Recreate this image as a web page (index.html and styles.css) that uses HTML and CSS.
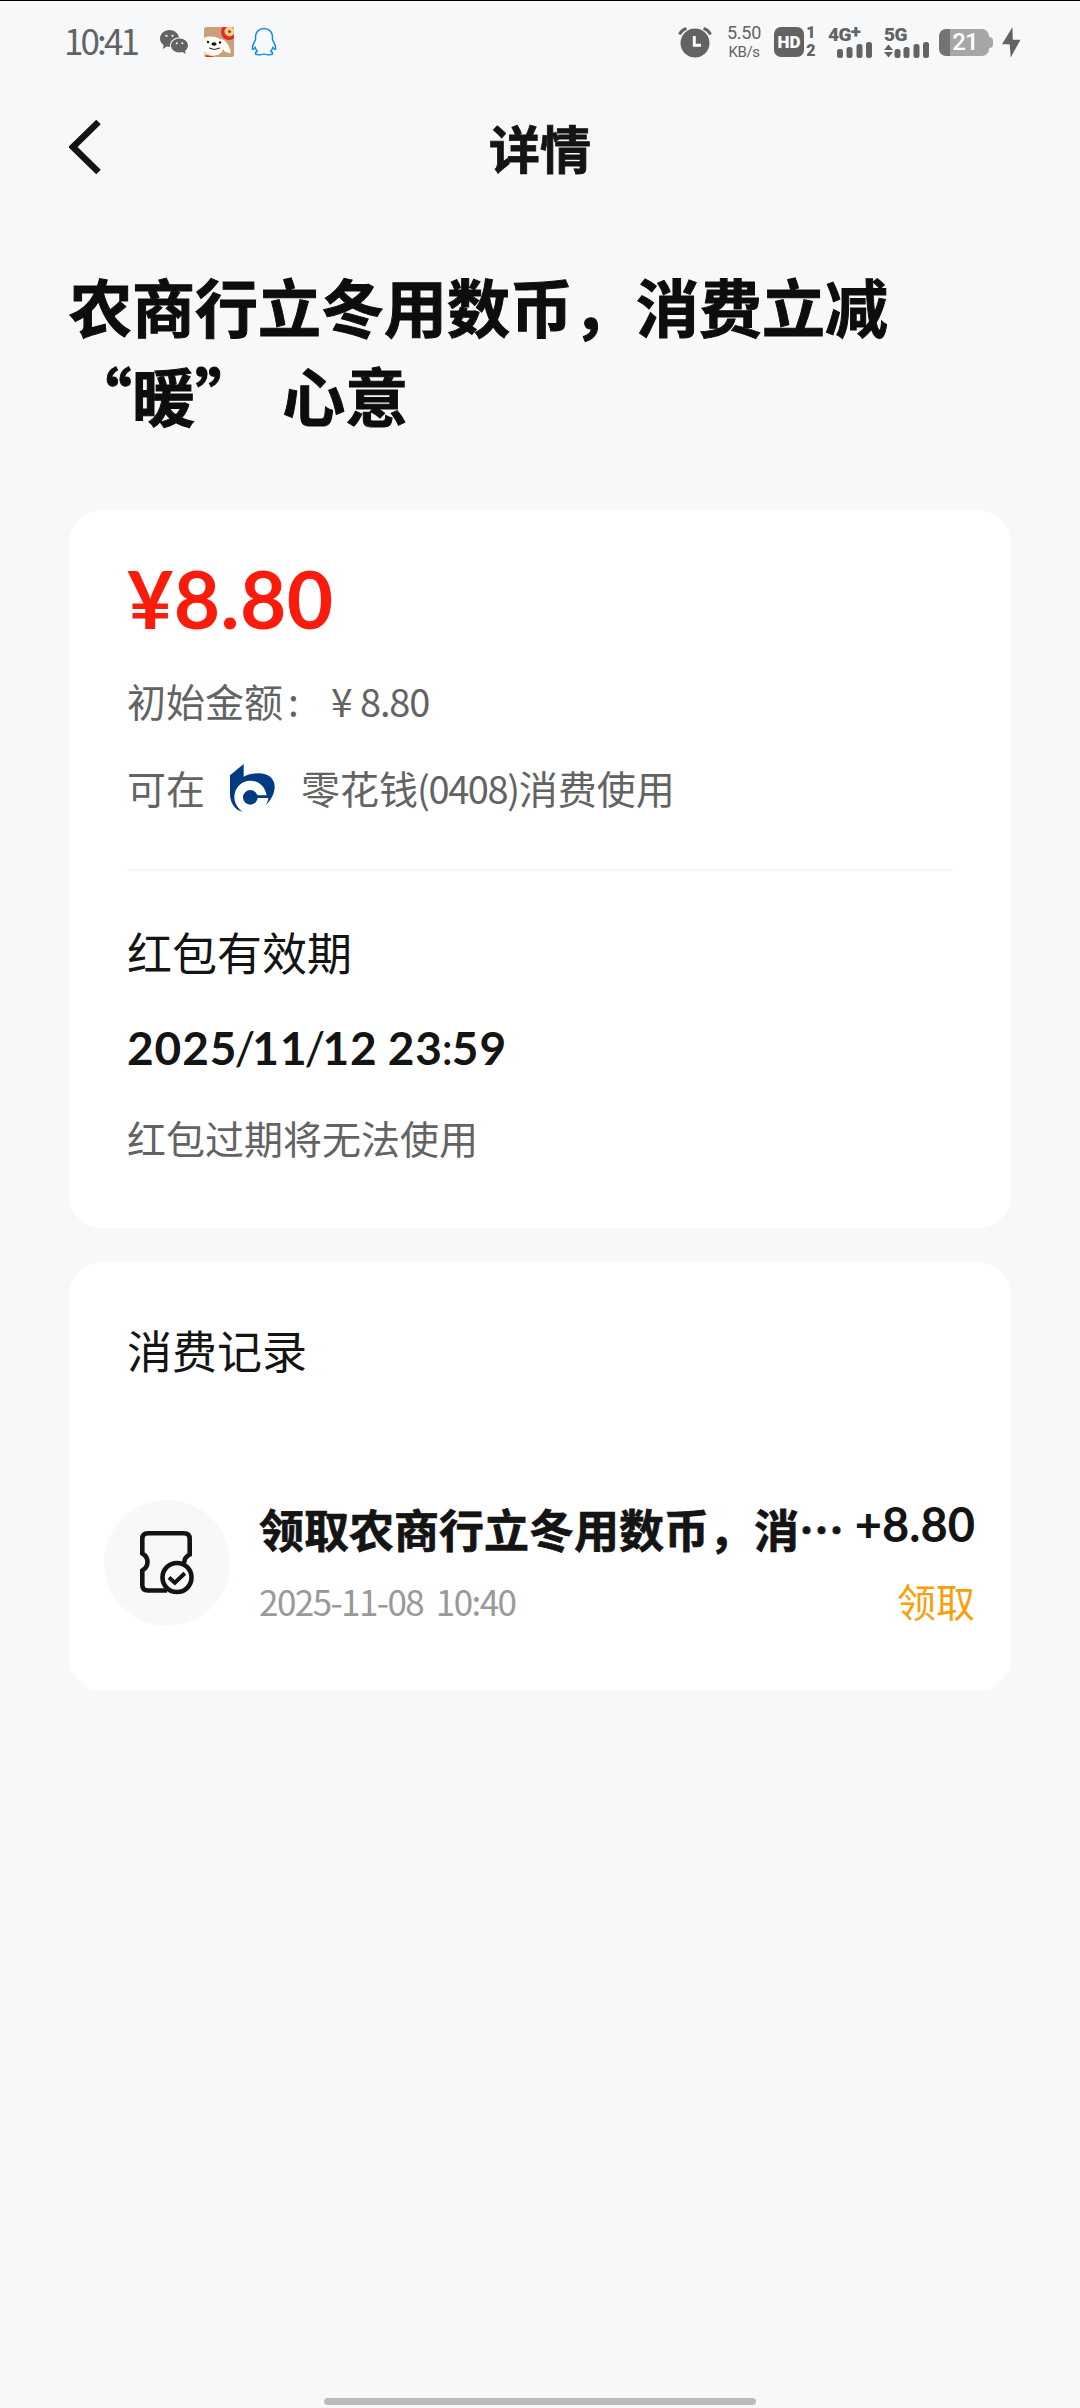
FILE: index.html
```html
<!DOCTYPE html>
<html lang="zh-CN">
<head>
<meta charset="utf-8">
<title>详情</title>
<link rel="stylesheet" href="styles.css">
</head>
<body>
<div class="screen">
  <header class="status">
    <span class="clock">10:41</span>
    <svg class="i-chat" width="28" height="25" viewBox="0 0 28 25">
      <path fill="#636363" d="M9.500 0C4.200 0 0 3.800 0 8.500c0 2.600 1.400 5 3.600 6.600L2.800 19l4-2.400c.9.200 1.800.3 2.700.3h.6c-1-5 3.500-9.500 9-9.300C18.300 3.300 14.300 0 9.500 0z"/>
      <path fill="#636363" d="M28 15.500c0-4-3.800-7-8.500-7s-8.500 3.100-8.500 7 3.800 7 8.500 7c1 0 2-.1 2.900-.4l3.400 2-.8-3.200c1.800-1.300 3-3.200 3-5.400z"/>
      <g fill="#f7f8fa"><circle cx="6.500" cy="5.800" r="1.100"/><circle cx="12.500" cy="5.800" r="1.100"/><circle cx="16.800" cy="13.200" r="1"/><circle cx="22.300" cy="13.200" r="1"/></g>
    </svg>
    <svg class="i-dog" width="30" height="30" viewBox="0 0 30 30">
      <defs><clipPath id="dogclip"><rect width="30" height="30" rx="2.500"/></clipPath></defs>
      <g clip-path="url(#dogclip)">
        <rect width="30" height="30" fill="#c9a077"/>
        <circle cx="25" cy="5" r="8" fill="#e12a20"/>
        <circle cx="25.500" cy="4.500" r="5" fill="#ffd08a"/>
        <circle cx="25.500" cy="4.500" r="1.500" fill="#93451c"/>
        <path d="M0 11c4-2 11-2 16 1 4 0 9 4 11 14-5 0-7-2-8-4-1 6-8 8-19 6z" fill="#fffdf8"/>
        <path d="M0 24c4 3 8 4 13 6H0z" fill="#f8d6b4"/>
        <path d="M1 28c3 0 6 1 11 2H2z" fill="#d92a25"/>
        <ellipse cx="10" cy="17" rx="2.600" ry="1.700" fill="#151515"/>
        <circle cx="4" cy="15" r="1.200" fill="#151515"/><circle cx="16" cy="15.500" r="1.200" fill="#151515"/>
        <path d="M5 21q5 3 11 0" fill="none" stroke="#222" stroke-width="1"/>
      </g>
    </svg>
    <svg class="i-qq" width="26" height="30" viewBox="0 0 26 30" fill="none" stroke="#168ae8" stroke-width="1.500" stroke-linejoin="round">
      <path d="M13 1.500c-5 0-8.500 3.600-8.500 8.300v3C3 15.500 1.300 18 1.300 21c0 1.500.8 1.800 1.500 1 .5-.6 1-1.200 1.300-1.800.4 1.700 1.200 3 2.200 4-1.500.6-2 1.500-1.900 2.400.2 1.300 4.600 1.700 8.600.3 4 1.400 8.400 1 8.600-.3.100-.9-.4-1.800-1.900-2.400 1-1 1.800-2.300 2.200-4 .3.600.8 1.200 1.300 1.800.7.800 1.500.5 1.500-1 0-3-1.700-5.500-3.200-8.200v-3c0-4.700-3.500-8.300-8.500-8.300z"/>
    </svg>
    <span class="spacer"></span>
    <svg class="i-alarm" width="34" height="31" viewBox="0 0 34 31">
      <circle cx="17" cy="16" r="14.500" fill="#636363"/>
      <path d="M1.500 7.500Q3.500 3 8.500 1.500M32.500 7.500Q30.500 3 25.500 1.500" fill="none" stroke="#636363" stroke-width="3"/>
      <path d="M16.300 9v9.300H23" fill="none" stroke="#f7f8fa" stroke-width="3"/>
    </svg>
    <span class="speed"><span class="rate">5.50</span><span class="unit">KB/s</span></span>
    <span class="hd">HD</span>
    <span class="sims"><span>1</span><span>2</span></span>
    <span class="net">
      <span class="net-name">4G<span class="plus">+</span></span>
      <svg width="36" height="16" viewBox="0 0 36 16" fill="#636363"><rect x="1" y="7" width="6" height="9" rx="2.500"/><rect x="10.500" y="5" width="6" height="11" rx="2.500"/><rect x="20.500" y="2" width="6" height="14" rx="2.500"/><rect x="30" y="0" width="6" height="16" rx="2.500"/></svg>
    </span>
    <span class="net net-5g">
      <span class="net-name">5G</span>
      <svg width="45" height="16" viewBox="0 0 45 16" fill="#636363"><path d="M0 8l4.500-5.500L9 8zM0 10h9l-4.500 5.500z"/><rect x="10.500" y="7" width="6" height="9" rx="2.500"/><rect x="19.500" y="5" width="6" height="11" rx="2.500"/><rect x="29.500" y="2" width="6" height="14" rx="2.500"/><rect x="39" y="0" width="6" height="16" rx="2.500"/></svg>
    </span>
    <span class="battery"><span class="level">21</span></span>
    <svg class="i-bolt" width="19" height="31" viewBox="0 0 19 31"><path d="M10.500 0L0 17.200h7.700L8.700 30.500 18.500 12.700H10.800z" fill="#636363"/></svg>
  </header>

  <nav class="navbar">
    <svg class="back" width="34" height="56" viewBox="0 0 34 56"><path d="M29.500 3L4 28 29.500 53" fill="none" stroke="#141414" stroke-width="6.500"/></svg>
    <h1 class="nav-title">详情</h1>
  </nav>

  <h2 class="headline">农商行立冬用数币，消费立减<br>“暖” 心意</h2>

  <main class="cards">
    <section class="card packet">
      <div class="amount">¥8.80</div>
      <div class="initial"><span>初始金额</span><span class="colon">:</span><span class="yen">¥</span><span class="digits">8.80</span></div>
      <div class="usable">
        <span>可在</span>
        <svg class="bank" width="45" height="48" viewBox="64 43 135 144" fill="#003a80">
          <path d="M105 43L64 77V133C64 160 80 183 102 186C88 178 77 160 77 143C77 114 98 93 125 93C150 93 169 110 174 137H144V145H179Q178 156 172 165C189 150 198 130 198 110C198 87 178 71 150 71Q120 71 105 81Z"/>
          <circle cx="125" cy="143" r="22"/>
        </svg>
        <span>零花钱<span class="digits">(0408)</span>消费使用</span>
      </div>
      <div class="divider"></div>
      <h3 class="label">红包有效期</h3>
      <div class="expiry">2025<span class="slash">/</span>11<span class="slash">/</span>12<span class="gap"> </span>23<span class="sep">:</span>59</div>
      <p class="note">红包过期将无法使用</p>
    </section>

    <section class="card records">
      <h3 class="label">消费记录</h3>
      <div class="record">
        <span class="badge">
          <svg width="56" height="66" viewBox="0 0 56 66" fill="none" stroke="#141417" stroke-width="4.600">
            <path d="M28 60.500H9Q3.300 60.500 3.300 55V40.500Q8.500 37.500 8.500 32T3.300 23.500V9Q3.300 3.300 9 3.300H45Q50.700 3.300 50.700 9V24.500Q45.500 27 45 33"/>
            <circle cx="38" cy="47.500" r="14.500"/>
            <path d="M30 47.500l5.800 5.200 10-9.500" stroke-width="4"/>
          </svg>
        </span>
        <div class="record-main">
          <div class="record-title">领取农商行立冬用数币，消<span class="dots">⋯</span></div>
          <div class="record-time">2025-11-08&nbsp; 10:40</div>
        </div>
        <div class="record-side">
          <div class="record-amount">+8.80</div>
          <div class="record-type">领取</div>
        </div>
      </div>
    </section>
  </main>
  <div class="home-bar"></div>
</div>
</body>
</html>
```
FILE: styles.css
```css
* { box-sizing: border-box; margin: 0; padding: 0; }
body { background: #f7f8fa; }
.screen {
  width: 1080px; height: 2408px; display: flex; flex-direction: column;
  border-top: 1px solid #000; background: #f7f8fa; color: #141414;
  font-family: "Noto Sans CJK SC", sans-serif; overflow: hidden;
}
svg { display: block; flex: none; }

.status { height: 82px; padding: 0 59px 0 64px; display: flex; align-items: center; color: #636363; }
.clock { width: 96px; font-size: 35px; line-height: 78px; height: 82px; white-space: nowrap; letter-spacing: -2.900px; }
.i-dog { margin-left: 16px; }
.i-qq { margin-left: 17px; }
.spacer { flex: 1; }
.speed { width: 34px; margin-left: 15px; display: flex; flex-direction: column; align-items: center; gap: 3px; white-space: nowrap; font-family: Roboto, sans-serif; }
.rate { font-size: 18px; line-height: 18px; letter-spacing: -.3px; }
.unit { font-size: 15px; line-height: 15px; letter-spacing: -.4px; }
.hd { width: 30px; height: 30px; margin-left: 13px; border-radius: 7px; background: #636363; color: #fff; font: 900 17px/30px Roboto, sans-serif; text-align: center; }
.sims { width: 12px; margin-left: 1px; display: flex; flex-direction: column; align-items: center; gap: 2px; font: 900 16px/16px Roboto, sans-serif; }
.net { width: 46px; height: 31px; margin-left: 11px; display: flex; flex-direction: column; }
.net svg { margin-left: 8px; }
.net-5g { margin-left: 10px; }
.net-5g svg { margin-left: 0; }
.net-name { display: flex; height: 15px; font: 900 19px/16px Roboto, sans-serif; letter-spacing: -.6px; white-space: nowrap; }
.plus { line-height: 10px; }
.battery { display: flex; align-items: center; margin-left: 9px; }
.battery::after { content: ""; width: 4px; height: 11px; border-radius: 0 4px 4px 0; background: #a6a6a6; }
.level { width: 50px; height: 27px; border-radius: 7px; padding-left: 2px; background: linear-gradient(90deg, #737373 11px, #a6a6a6 11px); color: #fff; font: 500 24px/27px Roboto, sans-serif; text-align: center; letter-spacing: -1px; }
.i-bolt { margin-left: 9px; }

.navbar { height: 130px; padding: 0 69px 3px; display: grid; grid-template-columns: 102px 1fr 102px; align-items: center; }
.nav-title { font-size: 51px; font-weight: 700; line-height: 124px; text-align: center; -webkit-text-stroke: .8px #141414; }

.headline { height: 297px; padding: 47px 0 0 69px; font-size: 63px; font-weight: 700; line-height: 89px; word-spacing: 10px; white-space: nowrap; color: #0d0d0d; -webkit-text-stroke: 1px #0d0d0d; }

.cards { padding: 0 69px; display: flex; flex-direction: column; gap: 34px; }
.card { background: #fff; border-radius: 33px; }
.packet { height: 718px; padding: 44px 58px 0 58px; }
.amount { height: 88px; font: 700 80px/88px Lato, sans-serif; letter-spacing: .4px; color: #fb1b0b; }
.initial { height: 87px; margin-top: 15px; display: flex; font-size: 39px; line-height: 87px; color: #636363; }
.colon { width: 48px; padding-left: 5px; }
.yen { width: 29px; }
.digits { font-size: 38px; letter-spacing: -1.200px; }
.usable { height: 86px; margin-top: 1px; display: flex; align-items: center; font-size: 39px; line-height: 84px; color: #636363; white-space: nowrap; }
.usable > span { height: 86px; }
.usable .digits { margin-left: -1px; letter-spacing: -1.400px; }
.bank { margin: 0 26px 0 25px; }
.divider { height: 2px; margin-top: 38px; background: #f5f5f6; }
.label { font-size: 45px; font-weight: 400; line-height: 66px; }
.packet .label { margin-top: 48px; }
.expiry { height: 66px; margin-top: 30px; font: 700 46px/66px Lato, sans-serif; letter-spacing: .900px; white-space: nowrap; display: flex; }
.slash, .sep { display: flex; justify-content: center; font-weight: 400; letter-spacing: 0; }
.slash { width: 15px; }
.sep { width: 9px; }
.gap { width: 10px; }
.note { margin-top: 27px; font-size: 39px; line-height: 58px; color: #636363; }

.records { height: 429px; padding: 55px 36px 0 35px; }
.records .label { padding-left: 23px; }
.record { display: flex; margin-top: 117px; }
.badge { width: 126px; height: 126px; border-radius: 50%; background: #f7f8fa; display: flex; align-items: center; justify-content: center; }
.record-main { width: 592px; margin-left: 29px; white-space: nowrap; }
.record-title { height: 72px; font-size: 45px; font-weight: 700; line-height: 57px; -webkit-text-stroke: .7px #141414; }
.record-time { font-size: 35px; line-height: 57px; letter-spacing: -1.550px; color: #999; }
.record-side { flex: 1; text-align: right; }
.record-amount { height: 74px; display: flex; justify-content: flex-end; font: 700 47px/48px Lato, sans-serif; white-space: nowrap; }
.record-type { font-size: 39px; line-height: 52px; color: #f79f0d; }

.home-bar { width: 432px; height: 7px; margin: auto auto 3px; border-radius: 4px; background: #babcbe; }
```
